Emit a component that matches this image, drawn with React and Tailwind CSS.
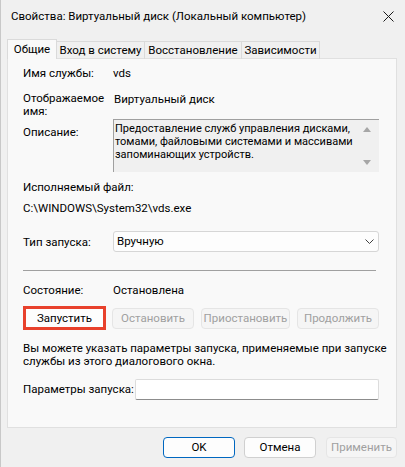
import React from "react";

const Btn = ({ children, disabled, className = "" }) => (
  <div
    className={
      "flex items-center justify-center h-[21px] rounded-[4px] border whitespace-nowrap " +
      (disabled
        ? "bg-[#f5f5f5] border-[#e5e5e5] text-[#a0a0a0] "
        : "bg-[#fdfdfd] border-[#d0d0d0] text-black ") +
      className
    }
  >
    {children}
  </div>
);

export default function App() {
  return (
    <div
      className="w-[405px] h-[467px] bg-[#f0f0f0] overflow-hidden text-[11.5px] leading-[13px] text-black border-l border-[#c8c8c8] whitespace-nowrap"
      style={{ fontFamily: 'Roboto, "Noto Sans", sans-serif' }}
    >
      {/* Title bar */}
      <div className="h-[32px] flex items-center justify-between pl-[10px] pr-[11px]">
        <span>Свойства: Виртуальный диск (Локальный компьютер)</span>
        <svg width="11" height="11" viewBox="0 0 11 11">
          <path d="M0.5 0.5 L10.5 10.5 M10.5 0.5 L0.5 10.5" stroke="#1a1a1a" strokeWidth="1" fill="none" />
        </svg>
      </div>

      {/* Tabs */}
      <div className="flex items-end ml-[6px] mt-[7px] h-[20px] relative z-10">
        <div className="w-[50px] h-[20px] bg-[#f9f9f9] border border-b-0 border-[#dadada] flex items-start justify-center pt-[3px]">
          Общие
        </div>
        <div className="w-[88px] h-[18px] border-t border-r border-[#dadada] flex items-center justify-center">
          Вход в систему
        </div>
        <div className="w-[97px] h-[18px] border-t border-r border-[#dadada] flex items-center justify-center">
          Восстановление
        </div>
        <div className="w-[78px] h-[18px] border-t border-r border-[#dadada] flex items-center justify-center">
          Зависимости
        </div>
      </div>

      {/* Panel */}
      <div className="ml-[6px] w-[390px] h-[370px] -mt-[1px] bg-[#f9f9f9] border border-[#e0e0e0] pl-[15px] pr-[17px] flex flex-col">
        <div className="flex mt-[8px]">
          <div className="w-[90px]">Имя службы:</div>
          <div>vds</div>
        </div>
        <div className="flex mt-[12px]">
          <div className="w-[90px]">
            Отображаемое
            <br />
            имя:
          </div>
          <div className="pt-[1px] pl-[1px]">Виртуальный диск</div>
        </div>
        <div className="flex mt-[1px]">
          <div className="w-[90px] pt-[7px]">Описание:</div>
          <div className="w-[266px] h-[53px] bg-[#f0f0f0] border-t border-l border-[#a0a0a0] flex">
            <div className="flex-1 pl-[1px] pt-[2px] text-[11px]">
              Предоставление служб управления дисками,
              <br />
              томами, файловыми системами и массивами
              <br />
              запоминающих устройств.
            </div>
            <div className="w-[17px] flex flex-col items-start pl-[1px] justify-between pt-[7px] pb-[7px]">
              <svg width="8" height="5" viewBox="0 0 8 5">
                <path d="M4 0 L8 5 L0 5 Z" fill="#a6a6a6" />
              </svg>
              <svg width="8" height="5" viewBox="0 0 8 5">
                <path d="M0 0 L8 0 L4 5 Z" fill="#a6a6a6" />
              </svg>
            </div>
          </div>
        </div>
        <div className="mt-[9px]">Исполняемый файл:</div>
        <div className="mt-[8px]">C:\WINDOWS\System32\vds.exe</div>
        <div className="flex items-center mt-[16px]">
          <div className="w-[90px] pt-[1px]">Тип запуска:</div>
          <div className="w-[266px] h-[21px] bg-[#fdfdfd] border border-[#d6d6d6] rounded-[3px] flex items-center justify-between pl-[3px] pr-[4px]">
            <span>Вручную</span>
            <svg width="9" height="5" viewBox="0 0 9 5">
              <path d="M0.5 0.5 L4.5 4.5 L8.5 0.5" stroke="#404040" strokeWidth="1" fill="none" />
            </svg>
          </div>
        </div>
        <div className="mt-[18px] h-[1px] w-[353px] bg-[#a0a0a0]" />
        <div className="flex mt-[13px]">
          <div className="w-[90px]">Состояние:</div>
          <div>Остановлена</div>
        </div>
        <div className="flex items-center mt-[9px] h-[24px]">
          <div className="w-[83px] h-[24px] border-[3px] border-[#e8412c] bg-[#fdfdfd] flex items-center justify-center">
            Запустить
          </div>
          <Btn disabled className="w-[82px] ml-[6px]">Остановить</Btn>
          <Btn disabled className="w-[89px] ml-[7px]">Приостановить</Btn>
          <Btn disabled className="w-[82px] ml-[7px]">Продолжить</Btn>
        </div>
        <div className="mt-[12px]">
          Вы можете указать параметры запуска, применяемые при запуске
          <br />
          службы из этого диалогового окна.
        </div>
        <div className="flex items-center mt-[11px]">
          <div className="flex-none w-[112px]">Параметры запуска:</div>
          <div className="flex-none w-[244px] h-[21px] bg-white border border-[#dcdcdc] border-b-[#8c8c8c] rounded-[2px]" />
        </div>
      </div>

      {/* Bottom buttons */}
      <div className="flex mt-[9px] ml-[162px]">
        <div className="w-[72px] h-[21px] rounded-[4px] border border-[#0067c0] bg-[#fdfdfd] flex items-center justify-center">
          OK
        </div>
        <Btn className="w-[72px] ml-[9px]">Отмена</Btn>
        <Btn disabled className="w-[71px] ml-[10px]">Применить</Btn>
      </div>
    </div>
  );
}
